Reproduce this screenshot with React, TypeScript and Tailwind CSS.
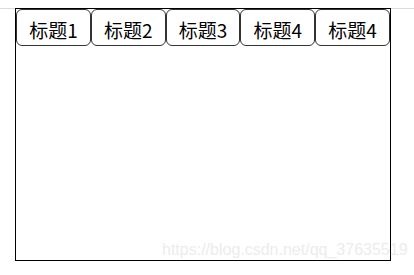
import React from 'react';

const tabs = ['标题1', '标题2', '标题3', '标题4', '标题4'];

const App: React.FC = () => {
    return (
        <div className="relative w-[414px] h-[275px] bg-white" style={{ fontFamily: '"Microsoft YaHei", "Noto Sans CJK SC", "Noto Sans", sans-serif' }}>
            <div className="h-[9px] border-b border-[#dcdcdc]" />
            <div className="ml-[15px] w-[376px] h-[253px] border border-black -mt-px">
                <div className="flex">
                    {tabs.map((tab, index) => (
                        <div
                            key={index}
                            className="flex-1 h-[37px] pt-[3px] flex items-center justify-center border border-[#333] rounded-[6px] text-[19px] text-black leading-none"
                        >
                            {tab}
                        </div>
                    ))}
                </div>
            </div>
            {/* watermark */}
            <div
                className="absolute left-[162px] top-[238px] text-[16px] text-[#ececec] whitespace-nowrap"
                style={{ fontFamily: '"Liberation Sans", Arial, sans-serif' }}
            >
                https://blog.csdn.net/qq_37635519
            </div>
        </div>
    );
};

export default App;
